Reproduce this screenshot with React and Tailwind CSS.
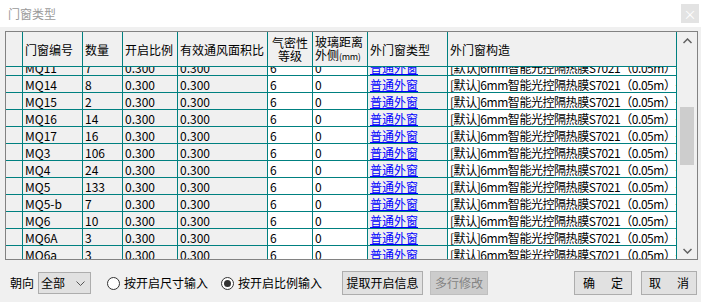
import React from "react";

const rows = [
  ["MQ11", "7"],
  ["MQ14", "8"],
  ["MQ15", "2"],
  ["MQ16", "14"],
  ["MQ17", "16"],
  ["MQ3", "106"],
  ["MQ4", "24"],
  ["MQ5", "133"],
  ["MQ5-b", "7"],
  ["MQ6", "10"],
  ["MQ6A", "3"],
  ["MQ6a", "3"],
];

const line = "border-r border-b border-[#008080]";

function HeadCell({ w, children, center }) {
  return (
    <div
      className={`${w} ${line} shrink-0 h-full flex flex-col justify-center ${
        center ? "items-center" : "pl-[2px]"
      } leading-[13px] overflow-hidden whitespace-nowrap`}
    >
      {children}
    </div>
  );
}

function Cell({ w, white, children, cls = "" }) {
  return (
    <div
      className={`${w} ${line} shrink-0 h-full pl-[2px] pt-[1px] leading-[16px] overflow-hidden whitespace-nowrap ${
        white ? "bg-white" : ""
      } ${cls}`}
    >
      {children}
    </div>
  );
}

function Radio({ checked, label }) {
  return (
    <label className="flex items-center gap-[4px]">
      <span className="w-[13px] h-[13px] rounded-full border border-[#333] bg-white flex items-center justify-center">
        {checked && <span className="w-[7px] h-[7px] rounded-full bg-[#333]" />}
      </span>
      <span>{label}</span>
    </label>
  );
}

export default function App() {
  return (
    <div className="w-[701px] h-[302px] bg-[#f0f0f0] text-[12px] text-black font-['Noto_Sans_CJK_SC',sans-serif] overflow-hidden">
      {/* title bar */}
      <div className="h-[27px] bg-white flex items-center justify-between pl-[8px] pr-[2px]">
        <span className="text-[#9a9a9a] leading-none">门窗类型</span>
        <span className="w-[18px] h-[19px] bg-[#e3e3e3] text-white flex items-center justify-center text-[13px] leading-none">
          ×
        </span>
      </div>

      {/* grid */}
      <div className="mt-[4px] ml-[5px] w-[693px] h-[229px] border border-[#828282] flex">
        <div className="w-[671px] flex flex-col">
          <div className="h-[35px] flex shrink-0">
            <HeadCell w="w-[17px]" />
            <HeadCell w="w-[60px]">门窗编号</HeadCell>
            <HeadCell w="w-[40px]">数量</HeadCell>
            <HeadCell w="w-[55px]">开启比例</HeadCell>
            <HeadCell w="w-[90px]">有效通风面积比</HeadCell>
            <HeadCell w="w-[45px]" center>
              <span>气密性</span>
              <span>等级</span>
            </HeadCell>
            <HeadCell w="w-[55px]">
              <span>玻璃距离</span>
              <span>
                外侧<span className="text-[9px] tracking-[-0.3px]">(mm)</span>
              </span>
            </HeadCell>
            <HeadCell w="w-[80px]">外门窗类型</HeadCell>
            <HeadCell w="w-[229px]">外门窗构造</HeadCell>
          </div>
          <div className="flex-1 overflow-hidden">
            <div className="mt-[-8px]">
              {rows.map(([id, n]) => (
                <div key={id} className="h-[17px] flex">
                  <Cell w="w-[17px]" />
                  <Cell w="w-[60px]">{id}</Cell>
                  <Cell w="w-[40px]">{n}</Cell>
                  <Cell w="w-[55px]">0.300</Cell>
                  <Cell w="w-[90px]">0.300</Cell>
                  <Cell w="w-[45px]" white>6</Cell>
                  <Cell w="w-[55px]" white>0</Cell>
                  <Cell w="w-[80px]" cls="text-[#0000ff] underline">
                    普通外窗
                  </Cell>
                  <Cell w="w-[229px]" white cls="tracking-[-0.45px]">
                    [默认]6mm智能光控隔热膜S7021（0.05m）+
                  </Cell>
                </div>
              ))}
            </div>
          </div>
        </div>
        {/* scrollbar */}
        <div className="w-[20px] flex flex-col items-center">
          <div className="h-[17px] w-full flex items-center justify-center">
            <svg width="9" height="6" viewBox="0 0 9 6">
              <path d="M0.5 5 L4.5 1 L8.5 5" fill="none" stroke="#606060" strokeWidth="1.5" />
            </svg>
          </div>
          <div className="flex-1 w-full px-[3px] pt-[58px]">
            <div className="h-[58px] bg-[#cdcdcd]" />
          </div>
          <div className="h-[17px] w-full flex items-center justify-center">
            <svg width="9" height="6" viewBox="0 0 9 6">
              <path d="M0.5 1 L4.5 5 L8.5 1" fill="none" stroke="#606060" strokeWidth="1.5" />
            </svg>
          </div>
        </div>
      </div>

      {/* footer */}
      <div className="mt-[11px] h-[24px] flex items-center pl-[10px]">
        <span>朝向</span>
        <div className="ml-[4px] w-[53px] h-[22px] border border-[#adadad] bg-[#e1e1e1] flex items-center justify-between pl-[2px] pr-[5px]">
          <span>全部</span>
          <svg width="9" height="5" viewBox="0 0 9 5">
            <path d="M0.5 0.5 L4.5 4.5 L8.5 0.5" fill="none" stroke="#555" strokeWidth="1" />
          </svg>
        </div>
        <div className="ml-[16px]">
          <Radio label="按开启尺寸输入" />
        </div>
        <div className="ml-[13px]">
          <Radio checked label="按开启比例输入" />
        </div>
        <button className="ml-[20px] w-[81px] h-[24px] border border-[#adadad] bg-[#e1e1e1] flex items-center justify-center">
          提取开启信息
        </button>
        <button className="ml-[7px] w-[58px] h-[24px] border border-[#bfbfbf] bg-[#cccccc] text-[#838383] flex items-center justify-center">
          多行修改
        </button>
        <button className="ml-[86px] w-[58px] h-[24px] border border-[#adadad] bg-[#e1e1e1] flex items-center justify-center gap-[16px]">
          <span>确</span>
          <span>定</span>
        </button>
        <button className="ml-[9px] w-[56px] h-[24px] border border-[#adadad] bg-[#e1e1e1] flex items-center justify-center gap-[16px]">
          <span>取</span>
          <span>消</span>
        </button>
      </div>
    </div>
  );
}
